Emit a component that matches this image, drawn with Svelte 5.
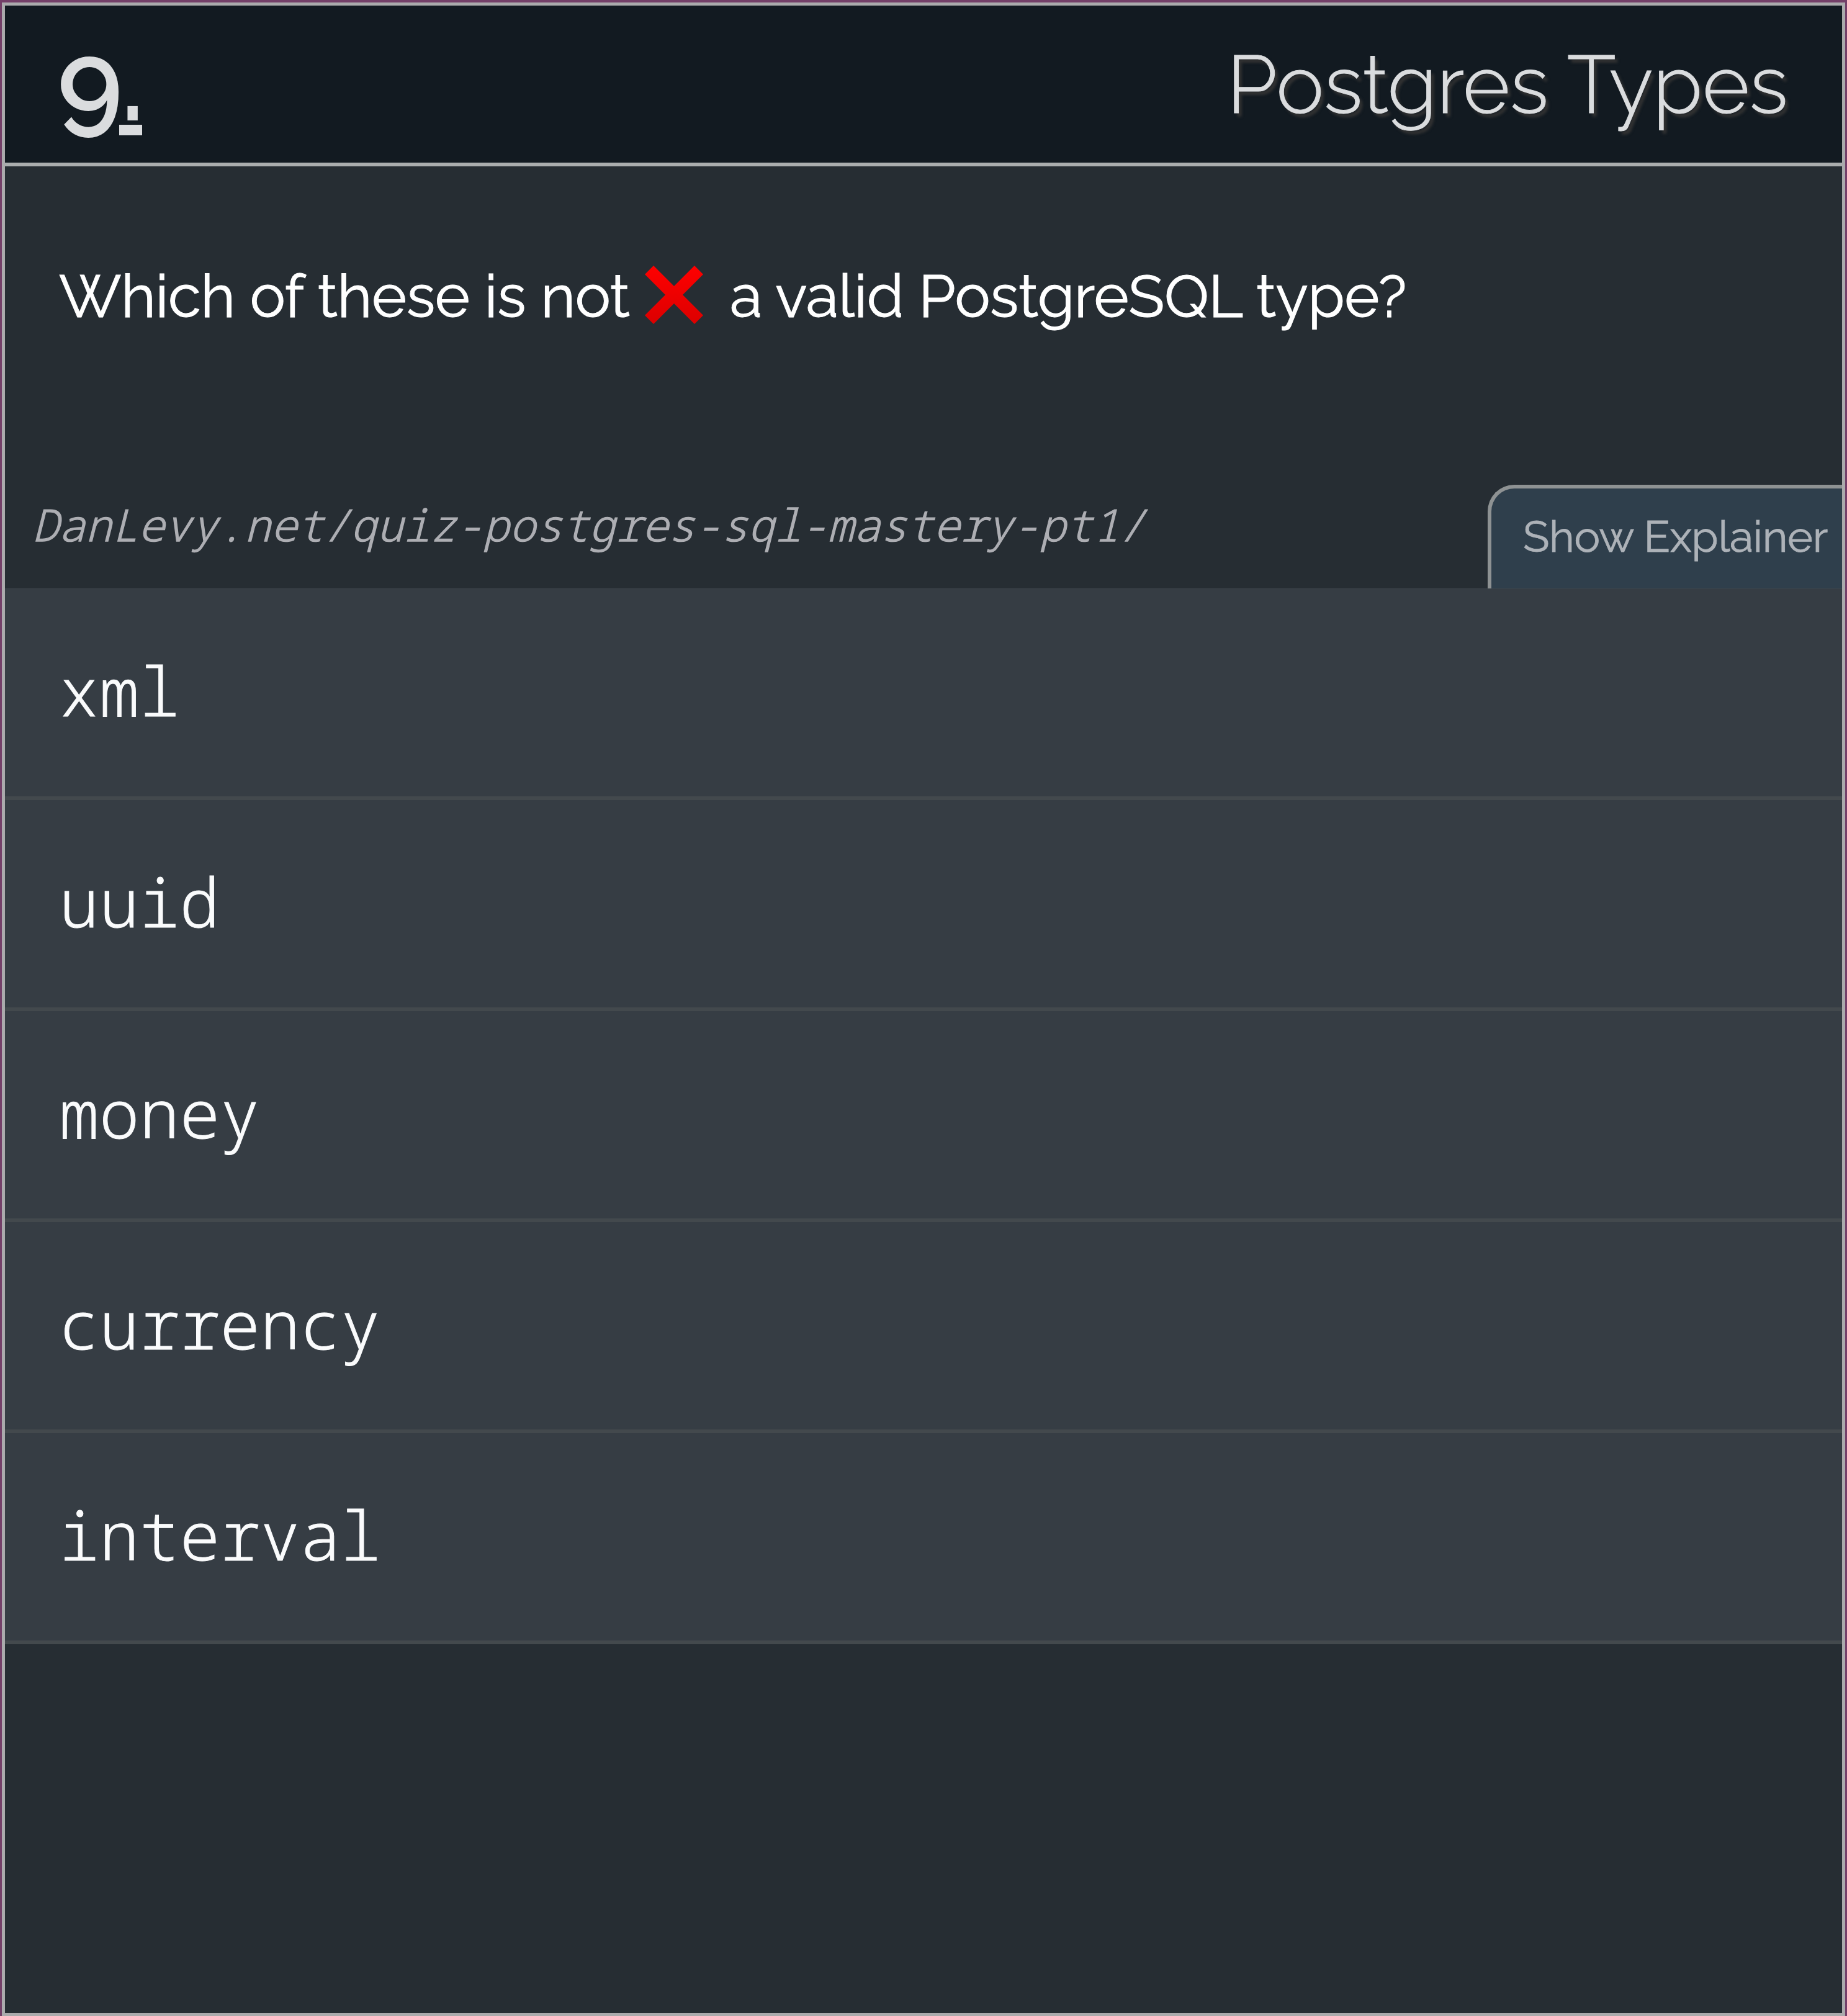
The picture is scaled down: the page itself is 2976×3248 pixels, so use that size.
<script>
  const options = ['xml', 'uuid', 'money', 'currency', 'interval'];
</script>

<main class="frame">
  <section class="card">
    <header class="header">
      <h2 class="number">9<span class="dot">.</span></h2>
      <h1 class="title">Postgres Types</h1>
    </header>

    <div class="question">
      <p class="prompt">
        <span class="lead">Which of these is not</span>
        <svg class="cross" viewBox="0 0 94 94" aria-hidden="true">
          <defs>
            <linearGradient id="cross-fill" x1="0" y1="0" x2="0" y2="1">
              <stop offset="0" stop-color="#ff0000" />
              <stop offset="1" stop-color="#dc0000" />
            </linearGradient>
          </defs>
          <path fill="url(#cross-fill)" d="M14 0 47 33 80 0 94 14 61 47 94 80 80 94 47 61 14 94 0 80 33 47 0 14Z" />
        </svg>
        <span class="tail">a valid PostgreSQL type?</span>
      </p>
      <div class="meta">
        <em class="url">DanLevy.net/quiz-postgres-sql-mastery-pt1/</em>
        <button class="explainer">Show Explainer</button>
      </div>
    </div>

    <ul class="options">
      {#each options as option}
        <li>{option}</li>
      {/each}
    </ul>
  </section>
</main>

<style>
  :global(body) {
    margin: 0;
    background: #733f68;
  }
  .frame {
    box-sizing: border-box;
    width: 2976px;
    height: 3248px;
    padding: 4px 3px 0;
    background: #733f68;
    font-family: Raleway, Lato, sans-serif;
  }
  .card {
    box-sizing: border-box;
    height: 3244px;
    border: 5px solid #aaaaac;
    background: #262d33;
    overflow: hidden;
  }
  .header {
    box-sizing: border-box;
    height: 259px;
    padding: 0 87px 0 84px;
    display: flex;
    justify-content: space-between;
    background: #121a21;
    border-bottom: 6px solid #aaadae;
    color: #dadcde;
  }
  h1,
  h2,
  p,
  ul {
    margin: 0;
    padding: 0;
  }
  .number {
    font-weight: 600;
    font-size: 180px;
    line-height: 243px;
    letter-spacing: -0.02em;
  }
  .dot {
    position: relative;
  }
  /* Heavy underline beneath the period only */
  .dot::after {
    content: '';
    position: absolute;
    left: -2px;
    right: 0;
    bottom: 18px;
    height: 17px;
    background: currentColor;
  }
  .title {
    font-size: 130px;
    font-weight: 300;
    line-height: 255px;
    text-shadow: 5px 6px 4px #333;
    -webkit-text-stroke: 1px;
    white-space: nowrap;
  }
  .question {
    height: 680px;
    display: flex;
    flex-direction: column;
    justify-content: space-between;
  }
  .prompt {
    display: flex;
    align-items: center;
    padding: 149px 0 0 87px;
    height: 116px;
    font-size: 96px;
    line-height: 116px;
    letter-spacing: -0.45px;
    -webkit-text-stroke: 1px;
    color: #fff;
    white-space: nowrap;
  }
  .lead,
  .tail {
    padding-top: 4px;
  }
  .lead {
    width: 944px;
  }
  .cross {
    width: 94px;
    height: 94px;
    margin-right: 43px;
  }
  .meta {
    display: flex;
    align-items: flex-end;
    justify-content: space-between;
  }
  .url {
    padding-left: 44px;
    height: 148px;
    font-family: "Noto Sans Mono", "Liberation Mono", monospace;
    font-size: 71.2px;
    font-weight: 300;
    line-height: 90px;
    -webkit-text-stroke: 1.3px;
    color: #adaeb3;
  }
  .explainer {
    box-sizing: border-box;
    width: 571px;
    height: 167px;
    margin: 0;
    padding: 0 0 0 51px;
    display: flex;
    border: solid #8e9293;
    border-width: 6px 0 0 6px;
    border-radius: 43px 0 0 0;
    background: #2f3f4c;
    color: #adb2b8;
    font: 400 70px/154px Raleway, Lato, sans-serif;
    letter-spacing: -0.4px;
    -webkit-text-stroke: 0.8px;
    white-space: nowrap;
  }
  .options {
    list-style: none;
    border-top: 1px solid #3c434a;
  }
  li {
    box-sizing: border-box;
    height: 340px;
    padding-left: 87px;
    border-bottom: 6px solid #43494d;
    background: #363d44;
    color: #fafbfc;
    font: 300 108px/328px "Noto Sans Mono", "Liberation Mono", monospace;
    -webkit-text-stroke: 1px;
  }
</style>
